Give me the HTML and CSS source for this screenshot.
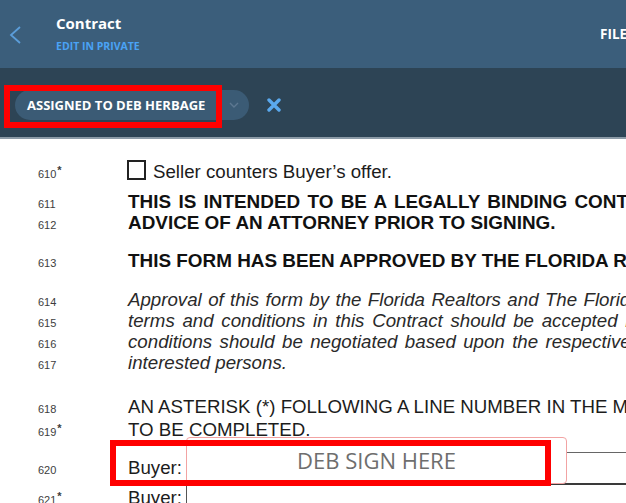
FILE: index.html
```html
<!DOCTYPE html>
<html lang="en">
<head>
<meta charset="utf-8">
<title>Contract</title>
<link rel="stylesheet" href="styles.css">
</head>
<body>
<div class="app">
  <header class="topbar">
    <div class="back">
      <svg width="14" height="20" viewBox="0 0 14 20"><polyline points="12,2 3,10 12,18" fill="none" stroke="#5b9dd9" stroke-width="1.8"/></svg>
    </div>
    <div class="title">
      <div class="name">Contract</div>
      <div class="sub">EDIT IN PRIVATE</div>
    </div>
    <nav class="nav">FILES</nav>
  </header>

  <div class="toolbar">
    <div class="pill">
      <span class="pill-text">ASSIGNED TO DEB HERBAGE</span>
      <svg class="caret" width="10" height="6" viewBox="0 0 10 6"><polyline points="1,1 5,5 9,1" fill="none" stroke="#5d7891" stroke-width="1.4"/></svg>
    </div>
    <svg class="close" width="14" height="14" viewBox="0 0 14 14"><path d="M2 2 L12 12 M12 2 L2 12" stroke="#5aa9ee" stroke-width="3.4" stroke-linecap="round"/></svg>
  </div>

  <main class="doc">
    <div class="row">
      <span class="num">610<span class="ast">*</span></span>
      <span class="txt"><span class="box"></span>Seller counters Buyer’s offer.</span>
    </div>

    <div class="para p611">
      <div class="row"><span class="num">611</span><span class="txt b w611">THIS IS INTENDED TO BE A LEGALLY BINDING CONTRACT. IF NOT FULLY UNDERSTOOD, SEEK THE</span></div>
      <div class="row"><span class="num">612</span><span class="txt b">ADVICE OF AN ATTORNEY PRIOR TO SIGNING.</span></div>
    </div>

    <div class="para p613">
      <div class="row"><span class="num">613</span><span class="txt b">THIS FORM HAS BEEN APPROVED BY THE FLORIDA REALTORS AND THE FLORIDA BAR.</span></div>
    </div>

    <div class="para p614">
      <div class="row"><span class="num">614</span><span class="txt i w614">Approval of this form by the Florida Realtors and The Florida Bar does not constitute an opinion that any of the</span></div>
      <div class="row"><span class="num">615</span><span class="txt i w615">terms and conditions in this Contract should be accepted by the parties in a particular transaction. Terms and</span></div>
      <div class="row"><span class="num">616</span><span class="txt i w616">conditions should be negotiated based upon the respective interests, objectives and bargaining positions of all</span></div>
      <div class="row"><span class="num">617</span><span class="txt i">interested persons.</span></div>
    </div>

    <div class="para p618">
      <div class="row"><span class="num">618</span><span class="txt">AN ASTERISK (*) FOLLOWING A LINE NUMBER IN THE MARGIN INDICATES THE LINE CONTAINS A BLANK</span></div>
      <div class="row"><span class="num">619<span class="ast">*</span></span><span class="txt">TO BE COMPLETED.</span></div>
    </div>

    <div class="fields">
      <div class="field-row first">
        <div class="lead"><span class="num">620</span><span class="label">Buyer:</span></div>
        <div class="field"></div>
      </div>
      <div class="field-row second">
        <div class="lead"><span class="num">621<span class="ast">*</span></span><span class="label">Buyer:</span></div>
        <div class="field"></div>
      </div>
    </div>
  </main>

  <div class="sign">DEB SIGN HERE</div>
  <div class="hl hl-assign"></div>
  <div class="hl hl-sign"></div>
</div>
</body>
</html>
```

FILE: styles.css
```css
* { box-sizing: border-box; }
html, body { margin: 0; padding: 0; }
body {
  width: 626px;
  height: 503px;
  overflow: hidden;
  background: #fff;
  font-family: "Liberation Sans", Arial, sans-serif;
}
.app {
  position: relative;
  width: 626px;
  height: 503px;
  overflow: hidden;
  background: #fff;
}

/* header */
.topbar {
  display: grid;
  grid-template-columns: 56px 544px 200px;
  height: 68px;
  background: #3b5e7b;
  overflow: hidden;
  font-family: "Open Sans", sans-serif;
}
.back { padding: 25px 0 0 8px; }
.back svg { display: block; }
.name {
  padding-top: 12.5px;
  font-size: 15px;
  line-height: 20px;
  font-weight: 700;
  color: #fff;
}
.sub {
  margin-top: 6.4px;
  font-size: 10.5px;
  line-height: 14px;
  font-weight: 700;
  color: #4aa3f5;
}
.nav {
  padding-top: 25px;
  font-size: 13.5px;
  line-height: 18px;
  font-weight: 700;
  color: #fff;
  white-space: nowrap;
}

/* toolbar */
.toolbar {
  height: 71px;
  background: #2d4455;
  border-bottom: 2px solid #8c9ba7;
  display: flex;
  align-items: flex-start;
  padding: 22px 0 0 15px;
}
.pill {
  width: 234px;
  height: 30px;
  border-radius: 15px;
  background: #3b5b75;
  display: flex;
  align-items: center;
  padding: 0 10px 0 12px;
}
.pill-text {
  flex: 1;
  font-family: "Open Sans", sans-serif;
  font-weight: 700;
  font-size: 13px;
  line-height: 30px;
  color: #fff;
  white-space: nowrap;
}
.caret { display: block; }
.close { display: block; margin: 8px 0 0 18px; }

/* document */
.doc {
  padding: 20.9px 0 0 38px;
  color: #1c1c1c;
  font-size: 18.7px;
  line-height: 20.8px;
}
.row {
  display: flex;
  align-items: baseline;
  height: 20.8px;
  white-space: nowrap;
}
.num {
  width: 90px;
  flex-shrink: 0;
  font-size: 11px;
  color: #3d3d3d;
}
.ast { font-size: 11px; font-weight: 700; vertical-align: 4px; margin-left: 1px; }
.txt { flex-shrink: 0; }
.b { font-weight: 700; color: #111; font-size: 18.9px; }
.i { font-style: italic; color: #2a2a2a; }
.box {
  display: inline-block;
  width: 19px;
  height: 20px;
  border: 2px solid #222;
  vertical-align: -1.6px;
  margin: 0 7px 0 -1px;
}
.p611 { margin-top: 11.5px; }
.p613 { margin-top: 17.5px; }
.p614 { margin-top: 18.2px; }
.p618 { margin-top: 23.5px; }
.w611 { word-spacing: 2.1px; }
.w614 { word-spacing: 1.2px; }
.w615 { word-spacing: 2.5px; }
.w616 { word-spacing: 2.2px; }

.fields { margin-top: 13.4px; }
.field-row { display: flex; height: 33px; }
.lead {
  display: flex;
  align-items: baseline;
  width: 148px;
  flex-shrink: 0;
  line-height: 20.8px;
  color: #1c1c1c;
}
.first .lead { padding-top: 6.2px; }
.second .lead { padding-top: 1.2px; }
.field { flex: 1; border-left: 1px solid #555; }
.first .field {
  border-top: 1px solid #666;
  border-bottom: 2px solid #3a3a3a;
}

/* overlays */
.sign {
  position: absolute;
  left: 186px;
  top: 437px;
  width: 381px;
  height: 47px;
  border: 1px solid #f2a3a3;
  border-radius: 4px;
  background: #fff;
  text-align: center;
  font-family: "Open Sans", sans-serif;
  font-size: 22px;
  line-height: 45px;
  color: #6e6e6e;
}
.hl {
  position: absolute;
  border: 6px solid #f00;
}
.hl-assign { left: 4px; top: 85px; width: 218px; height: 43px; }
.hl-sign { left: 110px; top: 440px; width: 441px; height: 46px; }
```
